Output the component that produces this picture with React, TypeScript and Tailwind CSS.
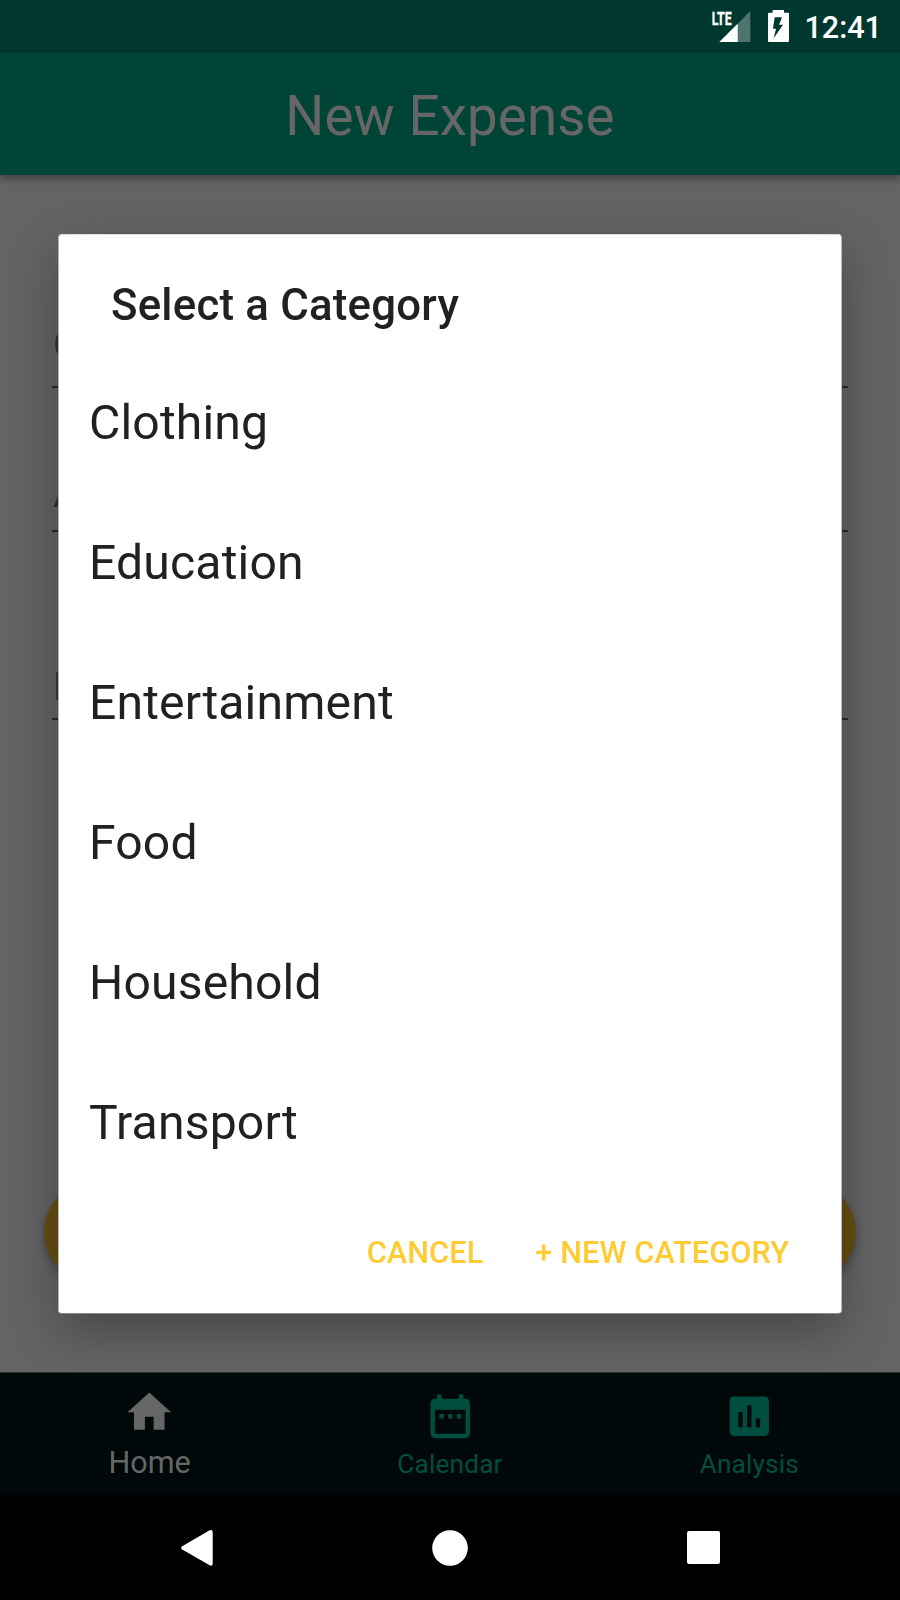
import React from "react";

const categories = ["Clothing", "Education", "Entertainment", "Food", "Household", "Transport"];

function StatusBar() {
  return (
    <div className="flex h-[52px] items-start justify-end bg-[#003830] pr-[18px]">
      <svg className="mt-[8px] h-[36px] w-[80px]" viewBox="60 24 240 108">
        <path d="M181 33V126H88z" fill="#4d746e" />
        <path d="M143 71V126H88z" fill="#fff" />
        <text x="65" y="74" fontSize="54" fontWeight="700" fontFamily="Roboto, sans-serif" fill="#fff" stroke="#fff" strokeWidth="1" textLength="60" lengthAdjust="spacingAndGlyphs">LTE</text>
        <path fillRule="evenodd" d="M248 30H282V38H294Q297 38 297 41V123Q297 126 294 126H237Q234 126 234 123V41Q234 38 237 38H248zM254 52L249 86H258L251 115L279 74H267L276 52z" fill="#fff" />
      </svg>
      <span className="ml-[14px] mt-[8px] text-[30.6px] font-medium leading-[40px] text-white">12:41</span>
    </div>
  );
}

function Field({ label, className }: { label: string; className: string }) {
  return (
    <div className={`mx-[52px] flex flex-col border-b-2 border-[#2c2c2c] pl-px text-[39.4px] leading-[46px] text-[#333333] ${className}`}>
      {label}
    </div>
  );
}

function Tab({ label, active, path }: { label: string; active?: boolean; path: string }) {
  return (
    <div className={`flex flex-1 flex-col items-center ${active ? "pr-px pt-[13px] text-[#666666]" : "pt-[17px] text-[#004e40]"}`}>
      <svg className="h-[52.5px] w-[52.5px] shrink-0" viewBox="0 0 24 24" fill="currentColor">
        <path d={path} />
      </svg>
      <span className={active ? "mt-[6px] text-[30.6px] leading-[36px]" : "mt-[5px] text-[26.25px] leading-[32px] tracking-[0.15px]"}>{label}</span>
    </div>
  );
}

export default function App() {
  return (
    <div className="relative flex h-[1600px] w-[900px] flex-col overflow-hidden bg-[#646464] font-[Roboto,sans-serif]">
      <StatusBar />
      <header className="flex h-[123px] items-center justify-center border-t border-[#003c33] bg-[#004438] pt-[3px] shadow-[0_3px_8px_rgba(0,0,0,0.4)]">
        <h1 className="text-[54.7px] leading-[64px] tracking-[0.12px] text-[#666666]">New Expense</h1>
      </header>
      <main className="flex h-[1197px] flex-col will-change-transform">
        <Field label="Category" className="mt-[147px] h-[66px]" />
        <Field label="Amount" className="mt-[83px] h-[61px]" />
        <Field label="Note" className="mt-[132px] h-[56px]" />
        <div className="mx-[44px] mt-[462px] h-[100px] rounded-full bg-[#664f12] shadow-[0_4px_8px_rgba(0,0,0,0.3)]" />
      </main>
      <nav className="relative flex h-[123px] border-t border-[#303435] bg-[#00080a] pr-px">
        <Tab active label="Home" path="M10 20v-6h4v6h5v-8h3L12 3 2 12h3v8z" />
        <Tab label="Calendar" path="M9 11H7v2h2v-2zm4 0h-2v2h2v-2zm4 0h-2v2h2v-2zm2-7h-1V2h-2v2H8V2H6v2H5c-1.11 0-1.99.9-1.99 2L3 20c0 1.1.89 2 2 2h14c1.1 0 2-.9 2-2V6c0-1.1-.9-2-2-2zm0 16H5V9h14v11z" />
        <Tab label="Analysis" path="M19 3H5c-1.1 0-2 .9-2 2v14c0 1.1.9 2 2 2h14c1.1 0 2-.9 2-2V5c0-1.1-.9-2-2-2zM9 17H7v-7h2v7zm4 0h-2V7h2v10zm4 0h-2v-4h2v4z" />
      </nav>
      <div className="flex h-[105px] items-center justify-between bg-black pl-[181px] pr-[180px]">
        <svg className="h-[36px] w-[32px]" viewBox="0 0 32 36">
          <path d="M28.2 .6Q31.7-1.2 31.7 2.4V33.4Q31.7 36.9 28.2 35.1L1.2 19.6Q-.9 18 1.2 16.2z" fill="#fff" />
        </svg>
        <svg className="h-[36px] w-[36px]" viewBox="0 0 36 36">
          <circle cx="18" cy="18" r="17.8" fill="#fff" />
        </svg>
        <div className="h-[33px] w-[33px] rounded-[2px] bg-white" />
      </div>

      <div role="dialog" className="absolute left-[58px] top-[234px] flex h-[1080px] w-[784px] flex-col rounded-[4px] border border-b-[#888888] border-l-[#b4b4b4] border-r-[#b8b8b8] border-t-[#dddddd] bg-white shadow-[0_17px_50px_rgba(0,0,0,0.3)]">
        <h2 className="mt-[44px] pl-[52px] text-[43.75px] font-medium leading-[52px] tracking-[0.22px] text-[#212121]">Select a Category</h2>
        <ul className="mt-[22px] flex flex-col">
          {categories.map((name) => (
            <li key={name} className="flex h-[140px] items-center pl-[30px] text-[48.1px] leading-[56px] tracking-[0.16px] text-[#212121]">
              {name}
            </li>
          ))}
        </ul>
        <div className="mt-[42px] flex justify-end gap-[52px] pr-[52px] text-[30.6px] font-medium leading-[36px] tracking-[0.15px] text-[#ffcb33]">
          <span>CANCEL</span>
          <span>+ NEW CATEGORY</span>
        </div>
      </div>
    </div>
  );
}
